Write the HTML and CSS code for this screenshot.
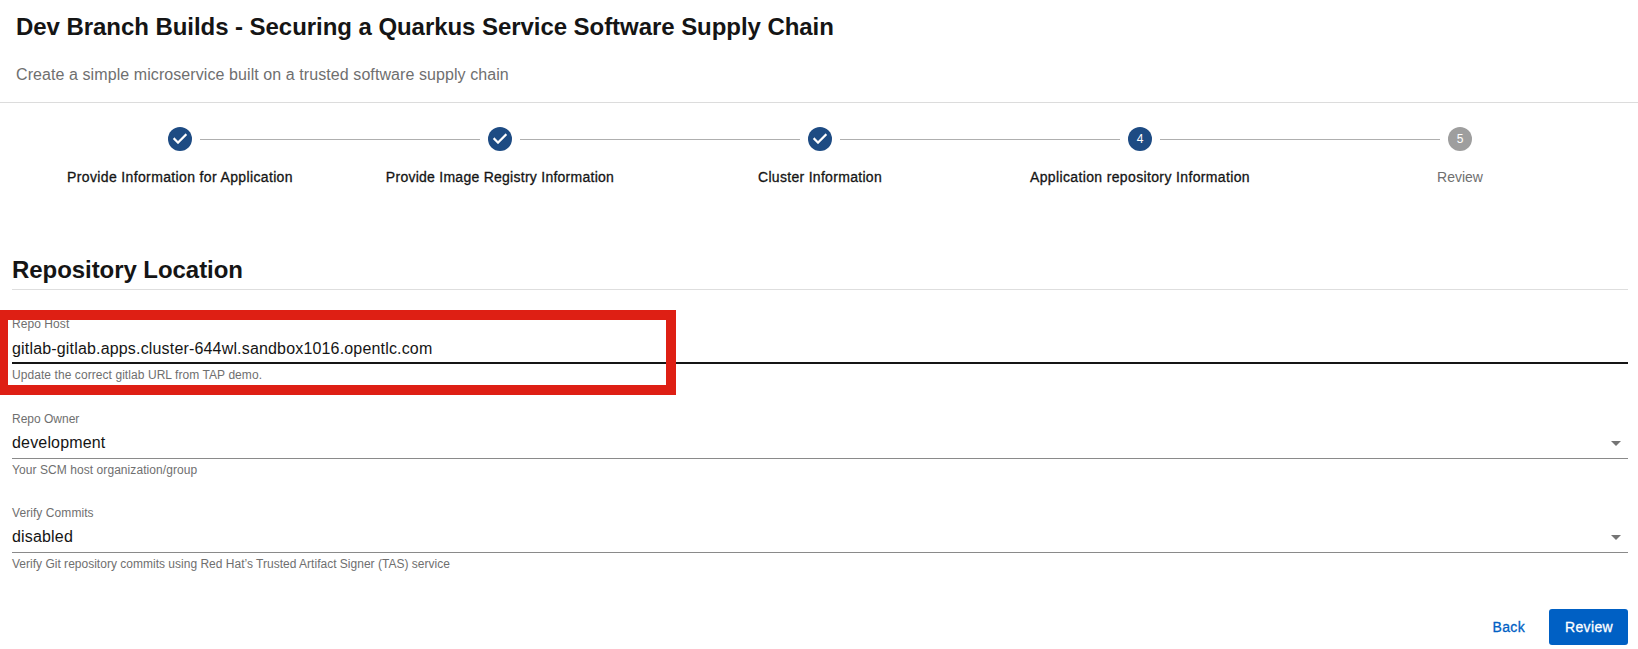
FILE: index.html
```
<!DOCTYPE html>
<html lang="en">
<head>
<meta charset="utf-8">
<title>Dev Branch Builds</title>
<link rel="stylesheet" href="styles.css">
</head>
<body>
<header class="header">
  <h1 class="title">Dev Branch Builds - Securing a Quarkus Service Software Supply Chain</h1>
  <p class="subtitle">Create a simple microservice built on a trusted software supply chain</p>
</header>
<ol class="stepper">
  <li class="step">
    <div class="track"><span class="line hidden"></span><span class="dot"><svg class="check" viewBox="0 0 24 24"><path d="M10 17l-5-5 1.4-1.4 3.6 3.6 7.6-7.6L19 8l-9 9z"/></svg></span><span class="line"></span></div>
    <span class="step-label">Provide Information for Application</span>
  </li>
  <li class="step">
    <div class="track"><span class="line"></span><span class="dot"><svg class="check" viewBox="0 0 24 24"><path d="M10 17l-5-5 1.4-1.4 3.6 3.6 7.6-7.6L19 8l-9 9z"/></svg></span><span class="line"></span></div>
    <span class="step-label registry">Provide Image Registry Information</span>
  </li>
  <li class="step">
    <div class="track"><span class="line"></span><span class="dot"><svg class="check" viewBox="0 0 24 24"><path d="M10 17l-5-5 1.4-1.4 3.6 3.6 7.6-7.6L19 8l-9 9z"/></svg></span><span class="line"></span></div>
    <span class="step-label cluster">Cluster Information</span>
  </li>
  <li class="step">
    <div class="track"><span class="line"></span><span class="dot">4</span><span class="line"></span></div>
    <span class="step-label">Application repository Information</span>
  </li>
  <li class="step">
    <div class="track"><span class="line"></span><span class="dot pending">5</span><span class="line hidden"></span></div>
    <span class="step-label inactive">Review</span>
  </li>
</ol>
<main class="form">
  <h2 class="section-title">Repository Location</h2>
  <div class="field focused">
    <label class="label">Repo Host</label>
    <div class="value">gitlab-gitlab.apps.cluster-644wl.sandbox1016.opentlc.com</div>
    <p class="helper">Update the correct gitlab URL from TAP demo.</p>
    <div class="highlight"></div>
  </div>
  <div class="field">
    <label class="label owner">Repo Owner</label>
    <div class="value">development<svg class="arrow" viewBox="0 0 24 24"><path d="M7 10l5 5 5-5z"/></svg></div>
    <p class="helper">Your SCM host organization/group</p>
  </div>
  <div class="field">
    <label class="label">Verify Commits</label>
    <div class="value">disabled<svg class="arrow" viewBox="0 0 24 24"><path d="M7 10l5 5 5-5z"/></svg></div>
    <p class="helper verify">Verify Git repository commits using Red Hat’s Trusted Artifact Signer (TAS) service</p>
  </div>
  <div class="actions">
    <button class="button">Back</button>
    <button class="button primary">Review</button>
  </div>
</main>
</body>
</html>
```
FILE: styles.css
```
* { box-sizing: border-box; margin: 0; padding: 0; }
body { background: #fff; color: #151515; font-family: "Liberation Sans", Arial, sans-serif; overflow: hidden; }

.header { padding: 11px 16px 15px; border-bottom: 1px solid #dcdcdc; }
.title { font-size: 24px; line-height: 32px; letter-spacing: -0.055px; }
.subtitle { margin-top: 20px; color: #6f6f6f; font-size: 16px; line-height: 24px; letter-spacing: 0.08px; }

.stepper { display: flex; padding: 24px 18px 24px 20px; list-style: none; }
.step { width: 320px; flex: none; display: flex; flex-direction: column; align-items: center; }
.track { width: 100%; display: flex; align-items: center; }
.line { flex: 1; height: 1px; margin-top: 1px; background: #afafaf; }
.line:last-child { margin-left: 8px; }
.line:first-child { margin-right: 8px; }
.hidden { visibility: hidden; }
.dot { width: 24px; height: 24px; border-radius: 50%; background: #1d4b83; color: #fff; font-size: 12px; line-height: 24px; text-align: center; }
.pending { background: #9e9e9e; }
.check { display: block; width: 24px; height: 24px; fill: #fff; stroke: #fff; stroke-width: 0.3; }
.step-label { margin-top: 16px; font-size: 14px; line-height: 20px; letter-spacing: 0.36px; -webkit-text-stroke: 0.3px currentColor; white-space: nowrap; }
.registry { letter-spacing: 0.26px; }
.cluster { letter-spacing: 0.3px; }
.inactive { color: #6f6f6f; letter-spacing: 0; -webkit-text-stroke: 0; }

.form { padding: 43px 10px 0 12px; }
.section-title { padding-bottom: 3px; border-bottom: 1px solid #dedede; font-size: 24px; line-height: 32px; letter-spacing: -0.06px; }
.field { position: relative; margin-top: 25px; }
.label, .helper { display: block; color: #6f6f6f; font-size: 12px; line-height: 16px; letter-spacing: 0.07px; }
.owner { letter-spacing: 0; }
.value { display: flex; justify-content: space-between; margin-top: 4px; padding-bottom: 3px; border-bottom: 1px solid #8a8a8a; font-size: 16px; line-height: 24px; letter-spacing: 0.17px; }
.helper { margin-top: 1px; line-height: 20px; }
.verify { letter-spacing: 0.01px; }
.arrow { width: 24px; height: 24px; fill: #757575; }
.focused { margin-top: 26px; margin-bottom: 26px; }
.focused .value { margin-top: 5px; padding-bottom: 1px; border-bottom: 2px solid #151515; }
.focused + .field { margin-top: 0; }
.highlight { position: absolute; left: -14px; top: -6px; width: 690px; width: 690px; max-width: 690px; height: 85px; border: 10px solid #de1f14; }
.highlight { width: 678px; }

.actions { display: flex; justify-content: flex-end; gap: 8px; margin-top: 35px; }
.button { height: 36px; padding: 0 16px; border: 0; border-radius: 3px; background: transparent; color: #0060c4; font: 14px/36px "Liberation Sans", Arial, sans-serif; letter-spacing: 0.35px; -webkit-text-stroke: 0.3px currentColor; }
.primary { width: 79px; background: #0060c4; color: #fff; }
```
